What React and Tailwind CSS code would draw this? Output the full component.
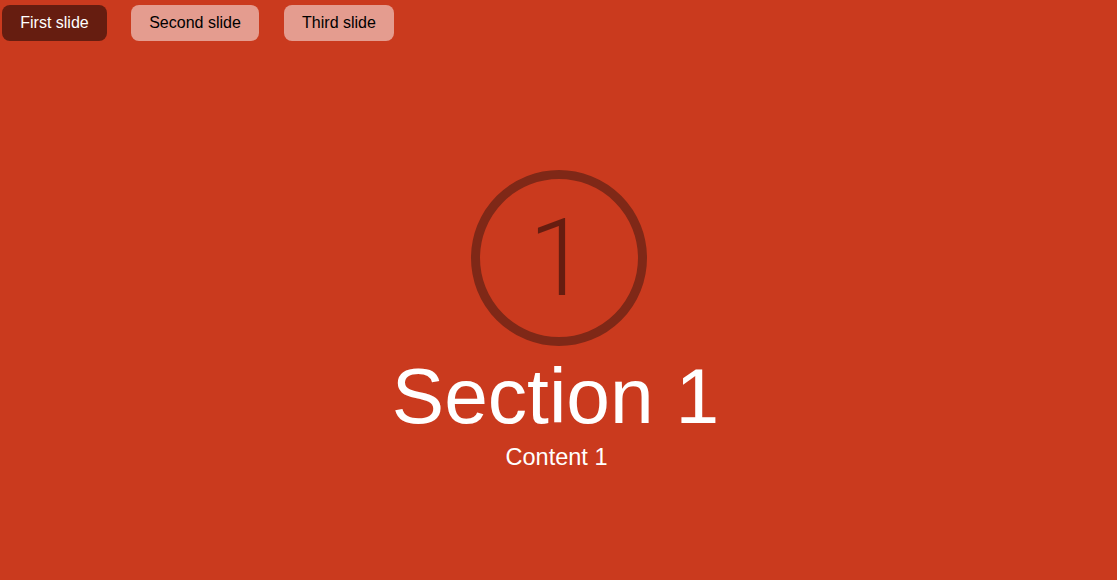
export default function App() {
  return (
    <div className="h-[580px] w-full bg-[#ca3a1e] overflow-hidden" style={{ fontFamily: '"Liberation Sans", Arial, sans-serif' }}>
      <div className="flex pl-[2px] pt-[5px]">
        <button className="h-[36px] w-[105px] rounded-[8px] bg-[#661d10] text-white text-[16px]">First slide</button>
        <button className="h-[36px] w-[128px] ml-[24px] rounded-[8px] bg-[#e49c8f] text-black text-[16px]">Second slide</button>
        <button className="h-[36px] w-[110px] ml-[25px] rounded-[8px] bg-[#e49c8f] text-black text-[16px]">Third slide</button>
      </div>
      <div className="flex flex-col items-center pt-[129px]">
        <div className="w-[176px] h-[176px] rounded-full border-[9px] border-[#7f2817] flex items-center justify-center">
          <span className="text-[108px] leading-none font-light text-[#661d10]" style={{ fontFamily: 'Roboto, sans-serif' }}>1</span>
        </div>
        <div className="text-white text-[78.5px] leading-[92px] mt-[4px] -ml-[6px]">Section 1</div>
        <div className="text-white text-[23.5px] leading-[28px] mt-[1px] -ml-[4px]">Content 1</div>
      </div>
    </div>
  );
}
